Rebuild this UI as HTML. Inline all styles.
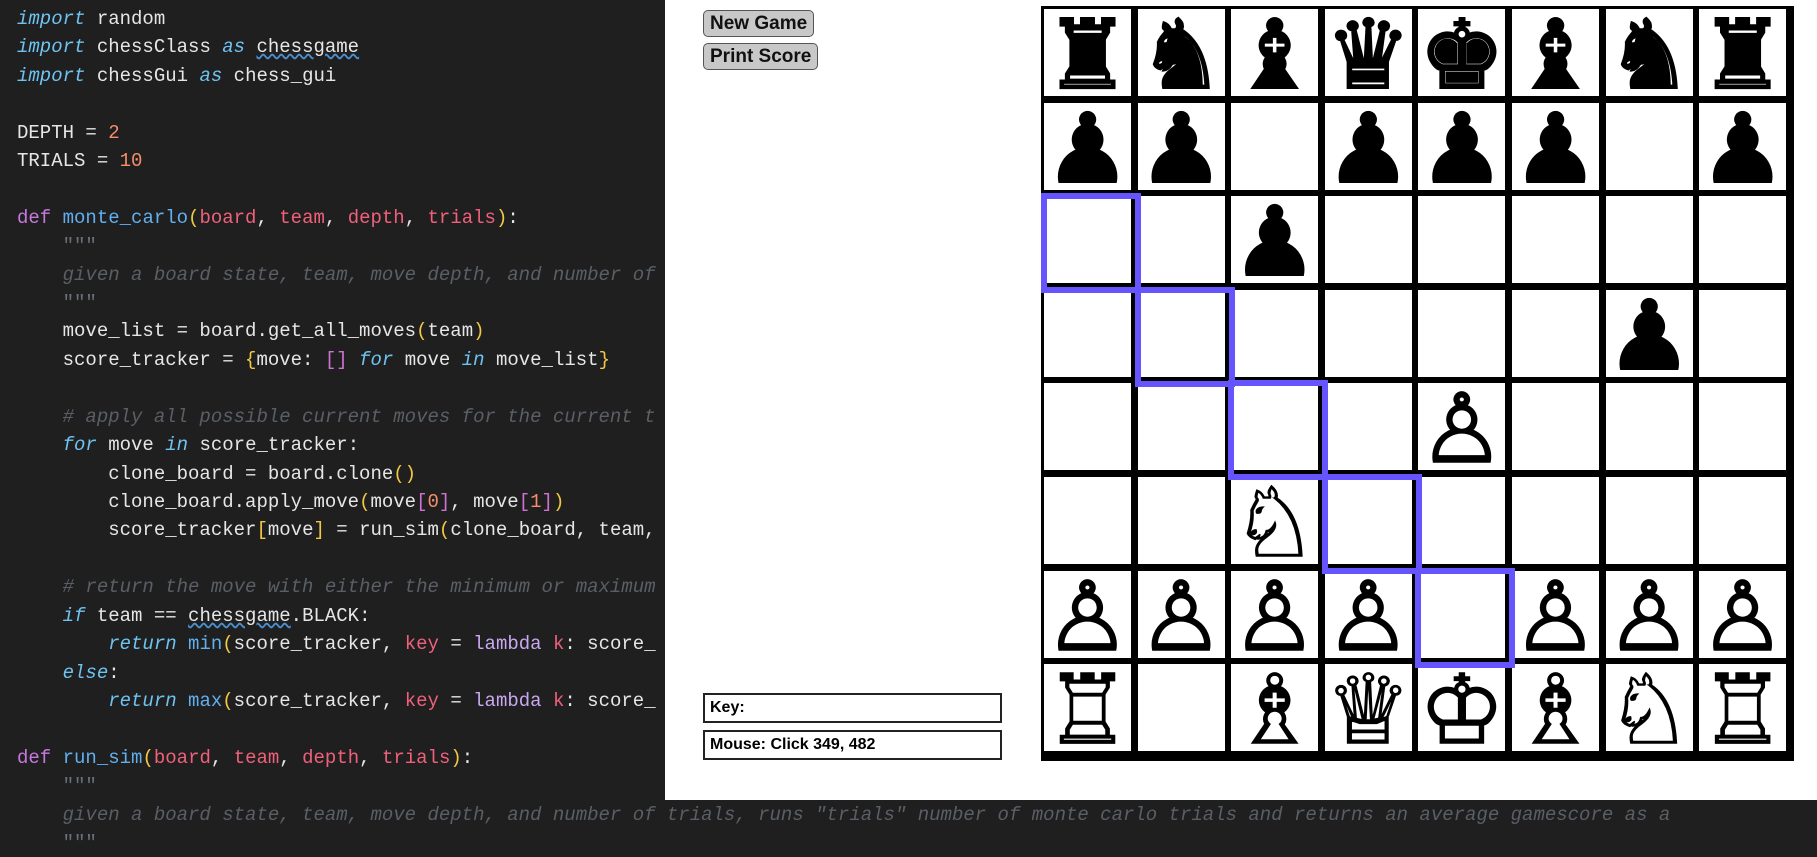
<!DOCTYPE html>
<html><head><meta charset="utf-8"><style>
body{margin:0;width:1817px;height:856px;background:#1f1f1f;position:relative;overflow:hidden;font-family:"Liberation Mono",monospace}
.l{position:absolute;left:17px;font-size:19px;color:#e6e6e6;white-space:pre;line-height:28px}
.i{font-style:italic;color:#6fc3f0}.k{color:#c678dd}.f{color:#61afef}.p{color:#f0607a}.n{color:#f78c6c}
.c{color:#5a5f66;font-style:italic}.y{color:#f2c744}.m{color:#d070d0}.o{color:#c8a8f0}.s{color:#6a7078}
.u{text-decoration:underline wavy #4a90d0}
#panel{position:absolute;left:665px;top:0;width:1152px;height:800px;background:#fff}
.btn{position:absolute;background:#c8c8c8;border:1px solid #555;border-radius:5px;font:bold 19px "Liberation Sans",sans-serif;color:#111;padding:0 6px;line-height:25px}
.box{position:absolute;border:2px solid #222;font:bold 16px "Liberation Sans",sans-serif;padding-left:5px;line-height:26px;width:290px;height:26px}
#board{position:absolute;left:1041px;top:6px;width:753px;height:755px;background:#000}
.cell{position:absolute;width:87px;height:87px;background:#fff;text-align:center;font:96px/92px "DejaVu Sans",sans-serif;color:#000;overflow:hidden}
.bk{-webkit-text-stroke:2px #000}
.wh{-webkit-text-stroke:1.5px #000}
.hl{position:absolute;width:88px;height:88px;border:6px solid #6655ff;box-sizing:content-box}
</style></head><body>
<div class="l" style="top:5px"><span class="i">import</span> random</div>
<div class="l" style="top:33px"><span class="i">import</span> chessClass <span class="i">as</span> <span class="u">chessgame</span></div>
<div class="l" style="top:62px"><span class="i">import</span> chessGui <span class="i">as</span> chess_gui</div>
<div class="l" style="top:119px">DEPTH = <span class="n">2</span></div>
<div class="l" style="top:147px">TRIALS = <span class="n">10</span></div>
<div class="l" style="top:204px"><span class="k">def</span> <span class="f">monte_carlo</span><span class="y">(</span><span class="p">board</span>, <span class="p">team</span>, <span class="p">depth</span>, <span class="p">trials</span><span class="y">)</span>:</div>
<div class="l s" style="top:232px">    """</div>
<div class="l c" style="top:261px">    given a board state, team, move depth, and number of</div>
<div class="l s" style="top:289px">    """</div>
<div class="l" style="top:317px">    move_list = board.get_all_moves<span class="y">(</span>team<span class="y">)</span></div>
<div class="l" style="top:346px">    score_tracker = <span class="y">{</span>move: <span class="m">[]</span> <span class="i">for</span> move <span class="i">in</span> move_list<span class="y">}</span></div>
<div class="l c" style="top:403px">    # apply all possible current moves for the current t</div>
<div class="l" style="top:431px">    <span class="i">for</span> move <span class="i">in</span> score_tracker:</div>
<div class="l" style="top:460px">        clone_board = board.clone<span class="y">()</span></div>
<div class="l" style="top:488px">        clone_board.apply_move<span class="y">(</span>move<span class="m">[</span><span class="n">0</span><span class="m">]</span>, move<span class="m">[</span><span class="n">1</span><span class="m">]</span><span class="y">)</span></div>
<div class="l" style="top:516px">        score_tracker<span class="y">[</span>move<span class="y">]</span> = run_sim<span class="y">(</span>clone_board, team,</div>
<div class="l c" style="top:573px">    # return the move with either the minimum or maximum</div>
<div class="l" style="top:602px">    <span class="i">if</span> team == <span class="u">chessgame</span>.BLACK:</div>
<div class="l" style="top:630px">        <span class="i">return</span> <span class="f">min</span><span class="y">(</span>score_tracker, <span class="p">key</span> = <span class="o">lambda</span> <span class="p">k</span>: score_</div>
<div class="l" style="top:659px">    <span class="i">else</span>:</div>
<div class="l" style="top:687px">        <span class="i">return</span> <span class="f">max</span><span class="y">(</span>score_tracker, <span class="p">key</span> = <span class="o">lambda</span> <span class="p">k</span>: score_</div>
<div class="l" style="top:744px"><span class="k">def</span> <span class="f">run_sim</span><span class="y">(</span><span class="p">board</span>, <span class="p">team</span>, <span class="p">depth</span>, <span class="p">trials</span><span class="y">)</span>:</div>
<div class="l s" style="top:772px">    """</div>
<div class="l c" style="top:801px">    given a board state, team, move depth, and number of trials, runs "trials" number of monte carlo trials and returns an average gamescore as a</div>
<div class="l s" style="top:829px">    """</div>
<div id="panel"></div>
<div class="btn" style="left:703px;top:10px">New Game</div>
<div class="btn" style="left:703px;top:43px">Print Score</div>
<div class="box" style="left:703px;top:693px">Key:</div>
<div class="box" style="left:703px;top:730px">Mouse: Click 349, 482</div>
<div id="board"></div>
<script>
var b=["♜♞♝♛♚♝♞♜","♟♟ ♟♟♟ ♟","  ♟     ","      ♟ ","    ♙   ","  ♘     ","♙♙♙♙ ♙♙♙","♖ ♗♕♔♗♘♖"];
var h="";
for(var r=0;r<8;r++)for(var c=0;c<8;c++){var ch=[...b[r]][c];var cls=(ch>="♚"&&ch<="♟")?"bk":"wh";h+='<div class="cell '+cls+'" style="left:'+(1044+c*93.6)+'px;top:'+(9+r*93.6)+'px">'+(ch==" "?"":ch)+'</div>';}
[[2,0],[3,1],[4,2],[5,3],[6,4]].forEach(function(p){h+='<div class="hl" style="left:'+(1041+p[1]*93.6)+'px;top:'+(6+p[0]*93.6)+'px"></div>';});
document.body.insertAdjacentHTML("beforeend",h);
</script>
</body></html>
